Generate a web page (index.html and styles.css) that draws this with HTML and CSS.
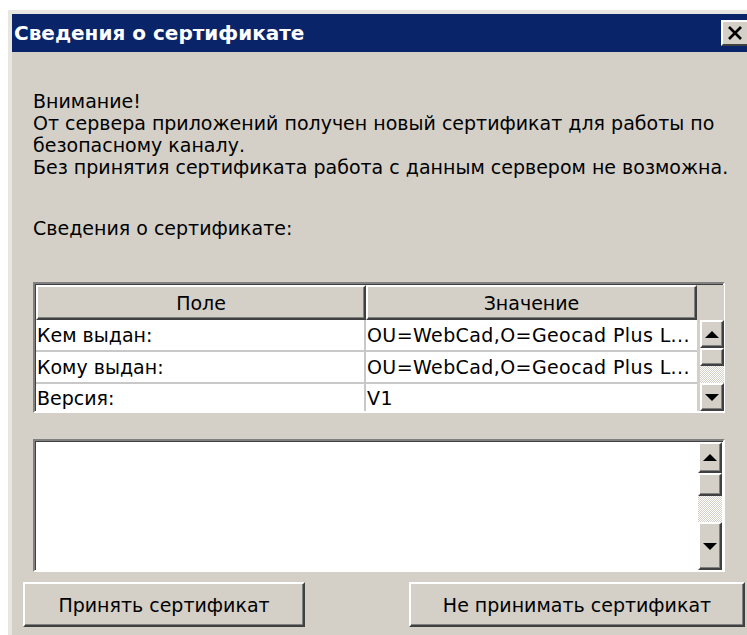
FILE: index.html
```html
<!DOCTYPE html>
<html lang="ru">
<head>
<meta charset="utf-8">
<title>Сведения о сертификате</title>
<link rel="stylesheet" href="styles.css">
</head>
<body>
<div class="window">
  <div class="titlebar">
    <span class="title">Сведения о сертификате</span>
    <span class="close">
      <svg width="18" height="16" viewBox="0 0 18 16"><path d="M3 2 L15 14 M15 2 L3 14" stroke="#000" stroke-width="2.6" fill="none"/></svg>
    </span>
  </div>
  <div class="content">
    <div class="message">
      <p>Внимание!</p>
      <p>От сервера приложений получен новый сертификат для работы по безопасному каналу.</p>
      <p>Без принятия сертификата работа с данным сервером не возможна.</p>
      <p class="gap">Сведения о сертификате:</p>
    </div>

    <div class="listview">
      <div class="lv-main">
        <div class="lv-head">
          <div class="hcell c1">Поле</div>
          <div class="hcell c2">Значение</div>
        </div>
        <div class="lv-row">
          <div class="cell c1">Кем выдан:</div>
          <div class="cell c2 val">OU=WebCad,O=Geocad Plus L...</div>
        </div>
        <div class="lv-row">
          <div class="cell c1">Кому выдан:</div>
          <div class="cell c2 val">OU=WebCad,O=Geocad Plus L...</div>
        </div>
        <div class="lv-row last">
          <div class="cell c1">Версия:</div>
          <div class="cell c2 val">V1</div>
        </div>
      </div>
      <div class="lv-side">
        <div class="corner"></div>
        <div class="vscroll rows">
          <div class="sbtn up"><span class="arr-up"></span></div>
          <div class="thumb t1"></div>
          <div class="track"></div>
          <div class="sbtn down"><span class="arr-down"></span></div>
        </div>
      </div>
    </div>

    <div class="memo">
      <div class="memo-text"></div>
      <div class="vscroll memo-sb">
        <div class="sbtn up"><span class="arr-up"></span></div>
        <div class="thumb t2"></div>
        <div class="track"></div>
        <div class="sbtn down"><span class="arr-down"></span></div>
      </div>
    </div>

    <div class="buttons">
      <button class="btn accept">Принять сертификат</button>
      <button class="btn reject">Не принимать сертификат</button>
    </div>
  </div>
</div>
</body>
</html>
```

FILE: styles.css
```css
html, body {
  margin: 0;
  padding: 0;
  background: #ffffff;
  overflow: hidden;
}

body {
  font-family: "DejaVu Sans", "Liberation Sans", sans-serif;
  font-size: 19px;
  color: #000;
}

.window {
  margin: 10px 0 0 8px;
  height: 640px;
  background: #d4d0c8;
  border-top: 4px solid #e8e6e1;
  border-left: 4px solid #e8e6e1;
  box-sizing: border-box;
}

.titlebar {
  height: 38px;
  background: #0a246a;
  display: flex;
  align-items: center;
  justify-content: space-between;
  padding-left: 2px;
}

.title {
  color: #fff;
  font-weight: bold;
  font-size: 20px;
}

.close {
  width: 26px;
  height: 26px;
  background: #d4d0c8;
  border-top: 2px solid #fff;
  border-left: 2px solid #fff;
  border-bottom: 2px solid #404040;
  box-sizing: border-box;
  display: flex;
  align-items: center;
  justify-content: center;
}

.content {
  padding: 38px 0 0 21px;
}

.message p {
  margin: 0;
  line-height: 22px;
  width: 712px;
}

.message p.gap {
  margin-top: 39px;
}

/* list view with column headers */
.listview {
  margin-top: 43px;
  width: 692px;
  height: 131px;
  display: flex;
  box-sizing: border-box;
  border-top: 2px solid #808080;
  border-left: 2px solid #808080;
  border-bottom: 2px solid #fff;
  border-right: 2px solid #fff;
  box-shadow: inset 1px 1px 0 #404040;
  padding: 1px 0 0 1px;
}

.lv-main {
  width: 661px;
  display: flex;
  flex-direction: column;
  background: #fff;
}

.lv-head {
  display: flex;
  height: 35px;
  background: #d4d0c8;
}

.hcell {
  box-sizing: border-box;
  height: 35px;
  display: flex;
  align-items: center;
  justify-content: center;
  border-top: 2px solid #fff;
  border-left: 2px solid #fff;
  border-bottom: 2px solid #404040;
  border-right: 2px solid #404040;
  box-shadow: inset -1px -1px 0 #808080;
}

.c1 { width: 330px; }
.c2 { width: 331px; }

.lv-row {
  display: flex;
  height: 32px;
  border-bottom: 2px solid #c8c8c8;
  box-sizing: border-box;
}

.lv-row.last {
  border-bottom: none;
  height: 27px;
}

.cell {
  box-sizing: border-box;
  padding-left: 1px;
  display: flex;
  align-items: center;
  white-space: nowrap;
  overflow: hidden;
}

.cell.val {
  letter-spacing: 0.4px;
}

.cell.c1 {
  border-right: 2px solid #c8c8c8;
}

.lv-side {
  flex: 1;
  display: flex;
  flex-direction: column;
  background: #d4d0c8;
}

.corner {
  height: 35px;
  flex: none;
}

/* scrollbars */
.vscroll {
  width: 24px;
  display: flex;
  flex-direction: column;
  margin-left: 3px;
}

.vscroll.rows {
  flex: 1;
}

.sbtn, .thumb {
  box-sizing: border-box;
  background: #d4d0c8;
  border-top: 2px solid #fff;
  border-left: 2px solid #fff;
  border-bottom: 2px solid #404040;
  border-right: 2px solid #404040;
  box-shadow: inset -1px -1px 0 #808080;
  display: flex;
  align-items: center;
  justify-content: center;
  flex: none;
}

.rows .sbtn { height: 28px; }
.rows .t1 { height: 18px; }

.track {
  flex: 1;
  background-color: #ffffff;
  background-image: repeating-conic-gradient(#d4d0c8 0 25%, #ffffff 0 50%);
  background-size: 2px 2px;
}

.arr-up {
  width: 0;
  height: 0;
  border-left: 7px solid transparent;
  border-right: 7px solid transparent;
  border-bottom: 7px solid #000;
}

.arr-down {
  width: 0;
  height: 0;
  border-left: 7px solid transparent;
  border-right: 7px solid transparent;
  border-top: 7px solid #000;
}

/* multi-line detail box */
.memo {
  margin-top: 26px;
  width: 692px;
  height: 133px;
  box-sizing: border-box;
  display: flex;
  border-top: 2px solid #808080;
  border-left: 2px solid #808080;
  border-bottom: 2px solid #fff;
  border-right: 2px solid #fff;
  box-shadow: inset 1px 1px 0 #404040;
  background: #fff;
  padding: 1px;
}

.memo-text {
  flex: 1;
}

.memo-sb {
  height: 128px;
  margin-left: 0;
}

.memo-sb .up { height: 31px; }
.memo-sb .t2 { height: 23px; }
.memo-sb .down { height: 48px; }

/* dialog buttons */
.buttons {
  margin-top: 10px;
  display: flex;
  margin-left: -10px;
}

.btn {
  font-family: "DejaVu Sans", "Liberation Sans", sans-serif;
  font-size: 19px;
  color: #000;
  background: #d4d0c8;
  height: 45px;
  box-sizing: border-box;
  border-top: 2px solid #fff;
  border-left: 2px solid #fff;
  border-bottom: 2px solid #404040;
  border-right: 2px solid #404040;
  box-shadow: inset -1px -1px 0 #808080;
  padding: 0;
}

.accept {
  width: 282px;
}

.reject {
  width: 336px;
  margin-left: 104px;
}
```
